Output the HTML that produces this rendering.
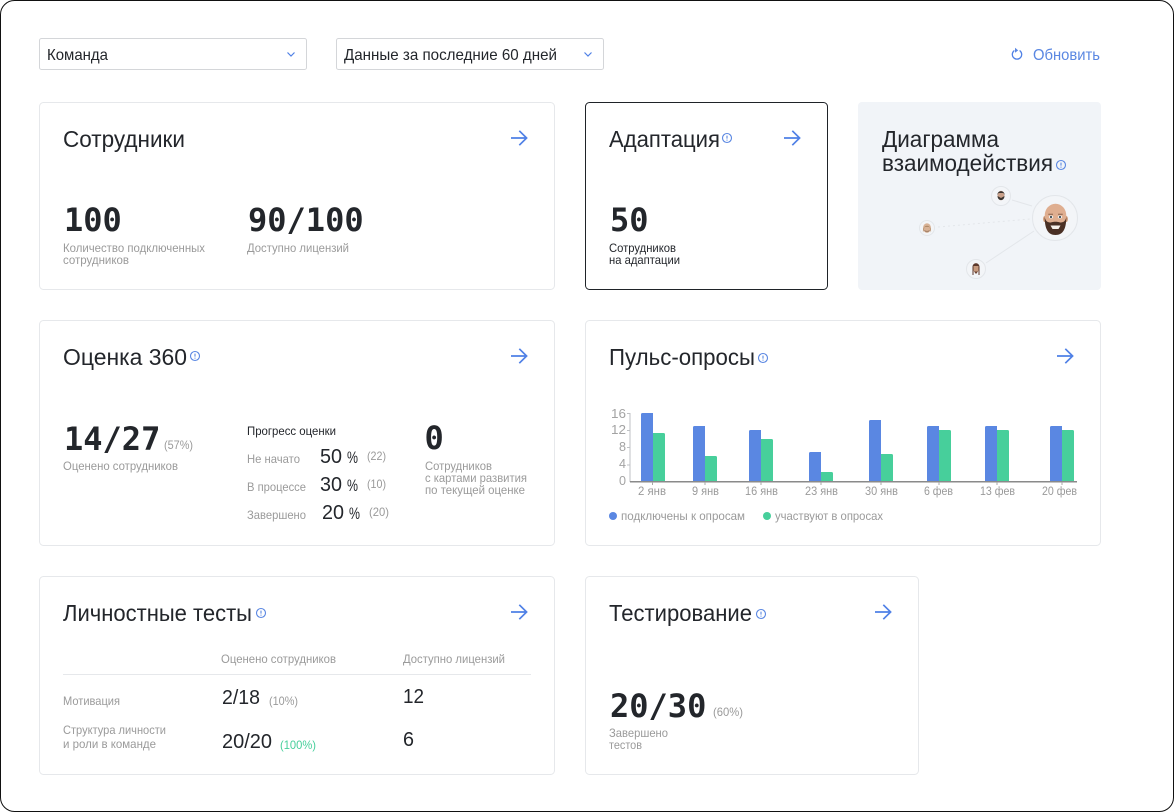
<!DOCTYPE html>
<html lang="ru">
<head>
<meta charset="utf-8">
<title>Дашборд</title>
<style>
html,body{margin:0;padding:0;background:#fff;width:1174px;height:812px;overflow:hidden}
svg{display:block}
text{font-family:"Liberation Sans","DejaVu Sans",sans-serif;fill:#23262b}
.t{font-size:23px}
.s{font-size:16px}
.m{font-family:"DejaVu Sans Mono","Liberation Mono",monospace;font-size:32px;font-weight:700;fill:#23262b}
.l{font-size:12px;fill:#9a9a9a}
.y{font-size:13px;fill:#a3a3a3}
.d{font-size:12px;fill:#23262b}
.n{font-size:20px}
.p{font-size:17px}
.c{fill:#fff;stroke:#e6e8eb;stroke-width:1}
.a{fill:none;stroke:#4f80e6;stroke-width:1.7}
.i{fill:none;stroke:#5a87e2;stroke-width:1.1}
.b{fill:#5a87e2}
.g{fill:#47cf9b}
</style>
</head>
<body>
<svg width="1174" height="812" viewBox="0 0 1174 812" xmlns="http://www.w3.org/2000/svg">
<defs>
<g id="arr"><path class="a" d="M0 8H15.400M8.300 .8L15.600 8L8.300 15.200"/></g>
<g id="inf"><circle class="i" cx="0" cy="0" r="4.500"/><path class="i" d="M0 -2.400V.6M0 1.600V2.600"/></g>
</defs>

<rect x=".5" y=".5" width="1173" height="811" rx="14" fill="#fff" stroke="#111" stroke-width="1"/>

<!-- filters -->
<rect x="39.500" y="38.500" width="267" height="31" rx="2" fill="#fff" stroke="#d4d6d9"/>
<rect x="336.500" y="38.500" width="267" height="31" rx="2" fill="#fff" stroke="#d4d6d9"/>
<text class="s" x="47" y="60" textLength="61" lengthAdjust="spacingAndGlyphs">Команда</text>
<text class="s" x="344" y="60" textLength="213" lengthAdjust="spacingAndGlyphs">Данные за последние 60 дней</text>
<path class="a" style="stroke-width:1.2" d="M287.500 52.500L291 56L294.500 52.500"/>
<path class="a" style="stroke-width:1.2" d="M584.500 52.500L588 56L591.500 52.500"/>
<path class="a" style="stroke-width:1.3" d="M1014.400 50.500A4.700 4.700 0 1 0 1019.600 50.500"/>
<path class="b" d="M1015 47.800L1018.200 50.400L1015 52.700Z"/>
<text class="s" x="1033" y="60" textLength="67" lengthAdjust="spacingAndGlyphs" style="fill:#5a87e2">Обновить</text>

<!-- cards -->
<rect class="c" x="39.500" y="102.500" width="515" height="187" rx="4"/>
<rect x="585.500" y="102.500" width="242" height="187" rx="4" fill="#fff" stroke="#1f2328"/>
<rect x="858" y="102" width="243" height="188" rx="4" fill="#f1f4f8"/>
<rect class="c" x="39.500" y="320.500" width="515" height="225" rx="4"/>
<rect class="c" x="585.500" y="320.500" width="515" height="225" rx="4"/>
<rect class="c" x="39.500" y="576.500" width="515" height="198" rx="4"/>
<rect class="c" x="585.500" y="576.500" width="333" height="198" rx="4"/>

<!-- card 1 -->
<text class="t" x="63" y="147" textLength="122" lengthAdjust="spacingAndGlyphs">Сотрудники</text>
<use href="#arr" x="511" y="130"/>
<text class="m" x="64" y="231">100</text>
<text class="m" x="248" y="231">90/100</text>
<text class="l" x="63" y="252" textLength="142" lengthAdjust="spacingAndGlyphs">Количество подключенных</text>
<text class="l" x="63" y="264" textLength="66" lengthAdjust="spacingAndGlyphs">сотрудников</text>
<text class="l" x="247" y="252" textLength="102" lengthAdjust="spacingAndGlyphs">Доступно лицензий</text>

<!-- card 2 -->
<text class="t" x="609" y="147" textLength="111" lengthAdjust="spacingAndGlyphs">Адаптация</text>
<use href="#inf" x="727" y="138"/>
<use href="#arr" x="784" y="130"/>
<text class="m" x="610" y="231">50</text>
<text class="d" x="609" y="252" textLength="67" lengthAdjust="spacingAndGlyphs">Сотрудников</text>
<text class="d" x="609" y="264" textLength="71" lengthAdjust="spacingAndGlyphs">на адаптации</text>

<!-- card 3 -->
<text class="t" x="882" y="147" textLength="117" lengthAdjust="spacingAndGlyphs">Диаграмма</text>
<text class="t" x="882" y="171" textLength="171" lengthAdjust="spacingAndGlyphs">взаимодействия</text>
<use href="#inf" x="1061" y="165"/>
<path d="M1012 200L1032 206M986 263L1034 231" stroke="#e3e6ea" stroke-width="1" fill="none"/>
<path d="M938 227L1030 219" stroke="#e3e6ea" stroke-width="1" stroke-dasharray="2 3" fill="none"/>
<circle cx="1055" cy="218" r="22.500" fill="#f3f5f8" stroke="#e3e6ea"/>
<circle cx="1001" cy="196" r="9.500" fill="#f3f5f8" stroke="#e3e6ea"/>
<circle cx="927" cy="228" r="7.500" fill="#f3f5f8" stroke="#e3e6ea"/>
<circle cx="976" cy="269" r="9.500" fill="#f3f5f8" stroke="#e3e6ea"/>
<!-- big face -->
<ellipse cx="1044.600" cy="219" rx="1.500" ry="3" fill="#cf9a78"/>
<ellipse cx="1066.400" cy="219" rx="1.500" ry="3" fill="#cf9a78"/>
<ellipse cx="1055.500" cy="215.500" rx="10.800" ry="11.800" fill="#dfae90"/>
<path d="M1044.700 217C1044.700 229 1048 235 1055.500 235C1063 235 1066.300 229 1066.300 217C1065.500 221.500 1063 222.500 1060 222.500C1058 221.500 1053 221.500 1051 222.500C1048 222.500 1045.500 221.500 1044.700 217Z" fill="#4a3025"/>
<ellipse cx="1051" cy="217" rx="2.100" ry="1.500" fill="#eef0f0"/>
<ellipse cx="1060" cy="217" rx="2.100" ry="1.500" fill="#eef0f0"/>
<circle cx="1051" cy="217" r="1.100" fill="#3b4a55"/>
<circle cx="1060" cy="217" r="1.100" fill="#3b4a55"/>
<path d="M1048.300 214.300H1053M1058 214.300H1062.700" stroke="#8a604a" stroke-width="1"/>
<path d="M1050.500 225.500H1060.500L1058.500 229H1052.500Z" fill="#f6f0ea"/>
<!-- small faces -->
<ellipse cx="1001" cy="195.500" rx="3.500" ry="4.700" fill="#c9a08a"/>
<path d="M997.500 195C997 190 1005 190 1004.500 195L1003.500 193H998.500Z" fill="#3a3430"/>
<path d="M997.500 196C997.800 201.500 1004.200 201.500 1004.500 196L1001 198Z" fill="#3a3430"/>
<ellipse cx="927" cy="228" rx="4" ry="4.800" fill="#d8b296"/>
<path d="M923 232.500C922 223.500 932 223.500 931 232.500L929.500 227H924.500Z" fill="#b08a68"/>
<path d="M924 230C925 233 929 233 930 230L927 231Z" fill="#a8846a"/>
<ellipse cx="976" cy="268.500" rx="3" ry="4" fill="#c69a7e"/>
<path d="M972.500 275V267C972.500 262 979.500 262 979.500 267V275H978.500V266H973.500V275Z" fill="#5c382b"/>
<path d="M974 271.500H978L976 274Z" fill="#6b4030"/>

<!-- card 4 -->
<text class="t" x="63" y="365" textLength="124" lengthAdjust="spacingAndGlyphs">Оценка 360</text>
<use href="#inf" x="195" y="356"/>
<use href="#arr" x="511" y="348"/>
<text class="m" x="64" y="450">14/27</text>
<text class="l" x="164" y="449" textLength="29" lengthAdjust="spacingAndGlyphs">(57%)</text>
<text class="l" x="63" y="470" textLength="115" lengthAdjust="spacingAndGlyphs">Оценено сотрудников</text>
<text class="d" x="247" y="435" textLength="89" lengthAdjust="spacingAndGlyphs">Прогресс оценки</text>
<text class="l" x="247" y="463" textLength="53" lengthAdjust="spacingAndGlyphs">Не начато</text>
<text class="n" x="320" y="463" textLength="22" lengthAdjust="spacingAndGlyphs">50</text>
<text class="p" x="347" y="463" textLength="11" lengthAdjust="spacingAndGlyphs">%</text>
<text class="l" x="367" y="460" textLength="19" lengthAdjust="spacingAndGlyphs">(22)</text>
<text class="l" x="247" y="491" textLength="59" lengthAdjust="spacingAndGlyphs">В процессе</text>
<text class="n" x="320" y="491" textLength="22" lengthAdjust="spacingAndGlyphs">30</text>
<text class="p" x="347" y="491" textLength="11" lengthAdjust="spacingAndGlyphs">%</text>
<text class="l" x="367" y="488" textLength="19" lengthAdjust="spacingAndGlyphs">(10)</text>
<text class="l" x="247" y="519" textLength="59" lengthAdjust="spacingAndGlyphs">Завершено</text>
<text class="n" x="322" y="519" textLength="22" lengthAdjust="spacingAndGlyphs">20</text>
<text class="p" x="349" y="519" textLength="11" lengthAdjust="spacingAndGlyphs">%</text>
<text class="l" x="369" y="516" textLength="20" lengthAdjust="spacingAndGlyphs">(20)</text>
<text class="m" x="424.500" y="449">0</text>
<text class="l" x="425" y="470" textLength="67" lengthAdjust="spacingAndGlyphs">Сотрудников</text>
<text class="l" x="425" y="482" textLength="102" lengthAdjust="spacingAndGlyphs">с картами развития</text>
<text class="l" x="425" y="494" textLength="100" lengthAdjust="spacingAndGlyphs">по текущей оценке</text>

<!-- card 5 -->
<text class="t" x="609" y="365" textLength="146" lengthAdjust="spacingAndGlyphs">Пульс-опросы</text>
<use href="#inf" x="763" y="358"/>
<use href="#arr" x="1057" y="348"/>
<path d="M630 413V482M627 413.500H630M627 430.500H630M627 447.500H630M627 465H630" stroke="#bfc1c4" stroke-width="1" fill="none"/>
<text class="y" x="611" y="418" textLength="15" lengthAdjust="spacingAndGlyphs">16</text>
<text class="y" x="611" y="434" textLength="15" lengthAdjust="spacingAndGlyphs">12</text>
<text class="y" x="619" y="451" textLength="7" lengthAdjust="spacingAndGlyphs">8</text>
<text class="y" x="619" y="468" textLength="7" lengthAdjust="spacingAndGlyphs">4</text>
<text class="y" x="619" y="485" textLength="7" lengthAdjust="spacingAndGlyphs">0</text>
<g class="b">
<path d="M641 482V414.500Q641 413 642.500 413H653V482Z"/>
<path d="M693 482V427.500Q693 426 694.500 426H705V482Z"/>
<path d="M749 482V431.500Q749 430 750.500 430H761V482Z"/>
<path d="M809 482V453.500Q809 452 810.500 452H821V482Z"/>
<path d="M869 482V421.500Q869 420 870.500 420H881V482Z"/>
<path d="M927 482V427.500Q927 426 928.500 426H939V482Z"/>
<path d="M985 482V427.500Q985 426 986.500 426H997V482Z"/>
<path d="M1050 482V427.500Q1050 426 1051.500 426H1062V482Z"/>
</g>
<g class="g">
<path d="M653 482V433H663.500Q665 433 665 434.500V482Z"/>
<path d="M705 482V456H715.500Q717 456 717 457.500V482Z"/>
<path d="M761 482V439H771.500Q773 439 773 440.500V482Z"/>
<path d="M821 482V472H831.500Q833 472 833 473.500V482Z"/>
<path d="M881 482V454H891.500Q893 454 893 455.500V482Z"/>
<path d="M939 482V430H949.500Q951 430 951 431.500V482Z"/>
<path d="M997 482V430H1007.500Q1009 430 1009 431.500V482Z"/>
<path d="M1062 482V430H1072.500Q1074 430 1074 431.500V482Z"/>
</g>
<rect x="630" y="481" width="447" height="1.500" fill="#8a8a8a"/>
<path d="M652.500 482V485M705 482V485M761 482V485M821 482V485M881 482V485M939 482V485M997 482V485M1062 482V485" stroke="#a8a8a8" fill="none"/>
<text class="l" x="638" y="495" textLength="28" lengthAdjust="spacingAndGlyphs">2 янв</text>
<text class="l" x="692" y="495" textLength="27" lengthAdjust="spacingAndGlyphs">9 янв</text>
<text class="l" x="745" y="495" textLength="33" lengthAdjust="spacingAndGlyphs">16 янв</text>
<text class="l" x="805" y="495" textLength="33" lengthAdjust="spacingAndGlyphs">23 янв</text>
<text class="l" x="865" y="495" textLength="33" lengthAdjust="spacingAndGlyphs">30 янв</text>
<text class="l" x="924" y="495" textLength="29" lengthAdjust="spacingAndGlyphs">6 фев</text>
<text class="l" x="980" y="495" textLength="35" lengthAdjust="spacingAndGlyphs">13 фев</text>
<text class="l" x="1042" y="495" textLength="35" lengthAdjust="spacingAndGlyphs">20 фев</text>
<circle class="b" cx="613" cy="516" r="4"/>
<text class="l" x="621" y="520" textLength="124" lengthAdjust="spacingAndGlyphs">подключены к опросам</text>
<circle class="g" cx="767" cy="516" r="4"/>
<text class="l" x="775" y="520" textLength="108" lengthAdjust="spacingAndGlyphs">участвуют в опросах</text>

<!-- card 6 -->
<text class="t" x="63" y="621" textLength="189" lengthAdjust="spacingAndGlyphs">Личностные тесты</text>
<use href="#inf" x="261" y="613"/>
<use href="#arr" x="511" y="604"/>
<text class="l" x="221" y="663" textLength="115" lengthAdjust="spacingAndGlyphs">Оценено сотрудников</text>
<text class="l" x="403" y="663" textLength="102" lengthAdjust="spacingAndGlyphs">Доступно лицензий</text>
<rect x="63" y="674" width="468" height="1" fill="#e6e8eb"/>
<text class="l" x="63" y="705" textLength="57" lengthAdjust="spacingAndGlyphs">Мотивация</text>
<text class="n" x="222" y="704" textLength="38" lengthAdjust="spacingAndGlyphs">2/18</text>
<text class="l" x="269" y="705" textLength="29" lengthAdjust="spacingAndGlyphs">(10%)</text>
<text class="n" x="403" y="703" textLength="21" lengthAdjust="spacingAndGlyphs">12</text>
<text class="l" x="63" y="734" textLength="103" lengthAdjust="spacingAndGlyphs">Структура личности</text>
<text class="l" x="63" y="748" textLength="93" lengthAdjust="spacingAndGlyphs">и роли в команде</text>
<text class="n" x="222" y="748" textLength="50" lengthAdjust="spacingAndGlyphs">20/20</text>
<text class="l" x="280" y="749" textLength="36" lengthAdjust="spacingAndGlyphs" style="fill:#47cf9b">(100%)</text>
<text class="n" x="403" y="746" textLength="11" lengthAdjust="spacingAndGlyphs">6</text>

<!-- card 7 -->
<text class="t" x="609" y="621" textLength="143" lengthAdjust="spacingAndGlyphs">Тестирование</text>
<use href="#inf" x="761" y="614"/>
<use href="#arr" x="875" y="604"/>
<text class="m" x="610" y="717">20/30</text>
<text class="l" x="713" y="716" textLength="30" lengthAdjust="spacingAndGlyphs">(60%)</text>
<text class="l" x="609" y="737" textLength="59" lengthAdjust="spacingAndGlyphs">Завершено</text>
<text class="l" x="609" y="749" textLength="33" lengthAdjust="spacingAndGlyphs">тестов</text>
</svg>
</body>
</html>
